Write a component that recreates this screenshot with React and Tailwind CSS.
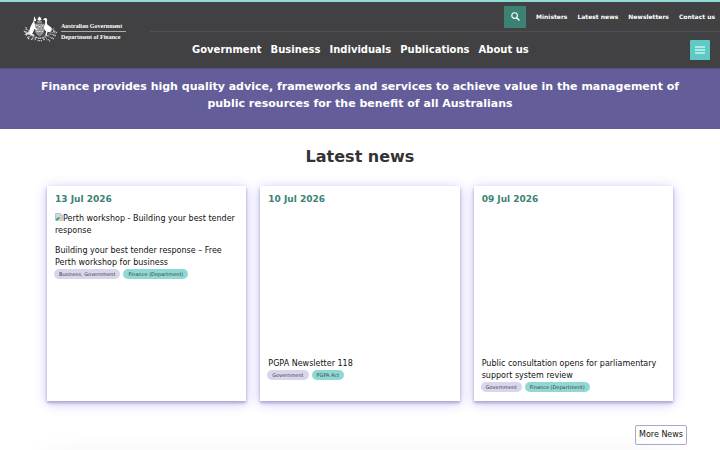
import React from 'react';

const topLinks = ['Ministers', 'Latest news', 'Newsletters', 'Contact us'];
const mainLinks = ['Government', 'Business', 'Individuals', 'Publications', 'About us'];

const news = [
  {
    date: '13 Jul 2026',
    alt: 'Perth workshop - Building your best tender response',
    title: 'Building your best tender response – Free Perth workshop for business',
    audience: 'Business, Government',
    topic: 'Finance (Department)',
  },
  {
    date: '10 Jul 2026',
    title: 'PGPA Newsletter 118',
    audience: 'Government',
    topic: 'PGPA Act',
  },
  {
    date: '09 Jul 2026',
    title: 'Public consultation opens for parliamentary support system review',
    audience: 'Government',
    topic: 'Finance (Department)',
  },
];

/* ═══════════════════════════════════════════════════════════
   LOGO
═══════════════════════════════════════════════════════════ */
const Crest = () => (
  <svg className="h-[26px] w-[35px] shrink-0" viewBox="0 0 104 78" fill="none" aria-hidden="true">
    {/* Star */}
    <path d="M52 1l2 4 4-1-2 4 3 3-4 1-1 4-2-3-2 3-1-4-4-1 3-3-2-4 4 1z" fill="#fff" />
    <path d="M45 18h14" stroke="#ddd" strokeWidth="3" />
    {/* Shield */}
    <path d="M40 24h25v18c0 10-6 14-12.500 18C46 56 40 52 40 42z" fill="#7c7c7e" stroke="#ccc" strokeWidth="1.500" />
    <path d="M48 24v31M57 24v31M40 39h25" stroke="#ddd" strokeWidth="1.500" />
    <path d="M42 29h4M50 32h5M59 30h4M43 46h4M50 46h5M59 46h3" stroke="#fff" strokeWidth="3" />
    {/* Kangaroo */}
    <path d="M35 7l2-6 2 6 3 4-1 4-5 1c2 7 3 13 4 20l5 3-1 3-8-3c-1 6-3 10-6 14l7 4-1 3-14-3c-6-1-10-4-15-8 6 2 10 1 13-3 3-4 3-10 6-16 2-6 7-10 9-19z" fill="#fff" />
    {/* Emu */}
    <path d="M68 12l-6-1 5-4c5-2 8 1 8 6 0 6-2 9 1 13 4 4 11 5 13 12 1 5-2 9-6 11l-7-2-2 9 5 3h-10l3-13c-6-4-8-9-6-16 2-7 5-11 2-18z" fill="#fff" />
    {/* Wattle */}
    <path
      d="M10 36l12 10M4 45l18 7M7 56l18-1M14 66l16-9M27 72l10-14M96 36L84 46M101 46l-18 6M98 57l-19-3M90 67L74 58M77 73L66 58M24 57c17 12 39 12 56 0M42 61l-5 12M62 61l6 12"
      stroke="#a5a5a7"
      strokeWidth="2.500"
    />
    <path
      d="M12 34v7m-6 5l7 2m-3 8l6-3m0 13l5-4m7 10l4-6m-14 2h6m-13-11h5m79-16v7m9 1l-7 2m4 9l-8-3m2 12l-6-4m-6 11l-4-6M39 70l5-7m22 9l-5-8M46 74h13M48 67h9"
      stroke="#ddd"
      strokeWidth="4"
      strokeDasharray="3 2"
    />
  </svg>
);

const Logo = () => (
  <a href="#" className="flex items-start gap-1 font-['Liberation_Serif',serif] font-bold text-white">
    <Crest />
    <span className="flex flex-col pt-[5px] text-[6px] leading-[10px]">
      <span className="border-b border-[#aaa] pr-1">Australian Government</span>
      <span>Department of Finance</span>
    </span>
  </a>
);

/* ═══════════════════════════════════════════════════════════
   HEADER
═══════════════════════════════════════════════════════════ */
const Header = () => (
  <header className="flex border-t-2 border-b border-t-[#8edbd5] border-b-[#55527a] bg-[#414042] font-bold text-white">
    <div className="w-[150px] shrink-0 pt-[14px] pl-[22px]">
      <Logo />
    </div>
    <div className="min-w-0 flex-1">
      <div className="flex h-[30px] items-center justify-end gap-[10px] border-b border-[#505052] pr-[5px]">
        <button type="button" aria-label="Search" className="flex size-[22px] items-center justify-center rounded-[1px] bg-[#3b8274]">
          <svg className="size-[9px]" viewBox="0 0 9 9" fill="none" stroke="currentColor">
            <circle cx="3.600" cy="3.600" r="2.800" strokeWidth="1.100" />
            <path d="M5.700 5.700L8.400 8.400" strokeWidth="1.400" />
          </svg>
        </button>
        {topLinks.map((label) => (
          <a key={label} href="#" className="text-[6px] leading-[8px] whitespace-nowrap">
            {label}
          </a>
        ))}
      </div>
      <div className="flex h-9 items-center justify-between pr-[10px] pl-[42px]">
        <nav className="flex gap-[9px] text-[10px] leading-3">
          {mainLinks.map((label) => (
            <a key={label} href="#" className="whitespace-nowrap">
              {label}
            </a>
          ))}
        </nav>
        <button type="button" aria-label="Menu" className="flex size-5 items-center justify-center rounded-[1px] bg-[#5fc9c3]">
          <svg className="h-2 w-[10px]" viewBox="0 0 10 8" stroke="#c9f5ef" strokeWidth="1.700">
            <path d="M0 1h10M0 4h10M0 7h10" />
          </svg>
        </button>
      </div>
    </div>
  </header>
);

/* ═══════════════════════════════════════════════════════════
   NEWS CARDS
═══════════════════════════════════════════════════════════ */
const BrokenImage = () => (
  <svg className="inline-block size-[8px] align-baseline" viewBox="0 0 16 16" aria-hidden="true">
    <path d="M1 1h10l4 4v4l-4 3-3-2-3 5H1z" fill="#c6d8f5" stroke="#999" />
    <path d="M2 13c1-5 5-6 9-3l-5 5H2z" fill="#4caf50" />
    <path d="M11 1v4h4M15 11v4H9z" fill="#fff" stroke="#999" />
  </svg>
);

const NewsCard = ({ item }) => (
  <article className="bg-white px-2 pt-[7px] pb-[9px] text-[8px] leading-3 text-[#111] shadow-[0_2px_3px_#a9a4d0,0_2px_12px_#c9c5f5]">
    <time className="block text-[9px] leading-3 font-bold text-[#3b8274]">{item.date}</time>
    {item.alt ? (
      <p className="mt-2 mb-2">
        <BrokenImage />
        {item.alt}
      </p>
    ) : (
      <div className="mt-2 mb-2 h-[137px]" />
    )}
    <h3>
      <a href="#">{item.title}</a>
    </h3>
    <div className="-ml-px flex gap-[3px] text-[5px] leading-[10px] text-[#414042]">
      <span className="rounded-full bg-[#d8d5ec] px-[5px]">{item.audience}</span>
      <span className="rounded-full bg-[#8fd8d3] px-[5px]">{item.topic}</span>
    </div>
  </article>
);

export default function App() {
  return (
    <div className="min-h-screen bg-white font-['DejaVu_Sans',sans-serif]">
      <Header />
      <main>
        <section className="bg-[#635d99] px-10 pt-[9px] pb-[17px] text-center text-[11px] leading-[17px] font-bold text-white">
          <p>
            Finance provides high quality advice, frameworks and services to achieve value in the management of public
            resources for the benefit of all Australians
          </p>
        </section>
        <section className="px-[47px] pt-4">
          <h2 className="text-center text-[16px] leading-6 font-bold text-[#333]">Latest news</h2>
          <div className="mt-[17px] grid grid-cols-3 gap-[14px]">
            {news.map((item) => (
              <NewsCard key={item.date} item={item} />
            ))}
          </div>
        </section>
        <div className="flex justify-end px-[33px] pt-6">
          <a href="#" className="rounded-[2px] border border-[#aaa6cc] px-[3px] py-[3px] text-[8px] leading-3 text-[#111]">
            More News
          </a>
        </div>
        <section className="mx-12 mt-4 h-10 shadow-[0_0_32px_#00000018]" />
      </main>
    </div>
  );
}
